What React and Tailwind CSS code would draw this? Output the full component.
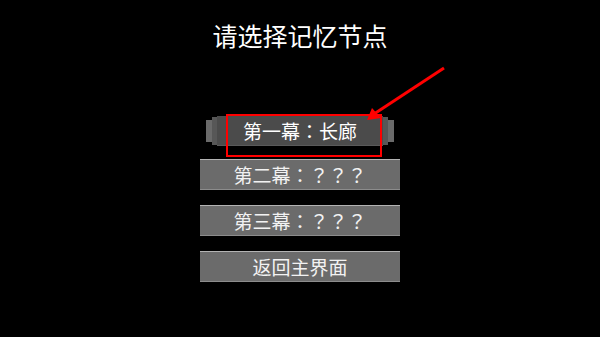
import React from "react";

const font = { fontFamily: '"Noto Sans CJK SC", "Noto Sans", sans-serif' };
const tc = { fontFamily: '"Noto Sans CJK TC", "Noto Sans CJK SC", sans-serif' };

function TC({ children }) {
  return <span style={tc}>{children}</span>;
}

function GrayButton({ children }) {
  return (
    <div className="w-[200px] h-[31px] bg-[#6b6b6b] border-t border-t-[#b3b3b3] border-b border-b-[#8c8c8c] flex items-center justify-center text-[19px] leading-none text-[#f2f2f2]">
      {children}
    </div>
  );
}

export default function App() {
  return (
    <div className="relative w-[600px] h-[337px] bg-black overflow-hidden flex flex-col items-center" style={font}>
      <div className="mt-[19px] h-[32px] flex items-center text-[25px] leading-none text-white">
        请选择记忆节点
      </div>

      <div className="mt-[65px] flex items-center">
        <div className="w-[6px] h-[22px] bg-[#6a6a6a]" />
        <div className="w-[5px] h-[28px] bg-[#575757]" />
        <div className="w-[166px] h-[30px] bg-[#4b4b4b] border-b border-b-[#5a5a5a] flex items-center justify-center text-[19px] leading-none text-white">
          第一幕<TC>：</TC>长廊
        </div>
        <div className="w-[5px] h-[28px] bg-[#575757]" />
        <div className="w-[6px] h-[22px] bg-[#6a6a6a]" />
      </div>

      <div className="mt-[13px] flex flex-col gap-[15px]">
        <GrayButton>第二幕<TC>：？？？</TC></GrayButton>
        <GrayButton>第三幕<TC>：？？？</TC></GrayButton>
        <GrayButton>返回主界面</GrayButton>
      </div>

      <div className="absolute left-[226px] top-[114px] w-[156px] h-[43px] border-2 border-[#ff0000]" />

      <svg className="absolute left-0 top-0" width="600" height="337" viewBox="0 0 600 337">
        <line x1="444" y1="68" x2="374" y2="114" stroke="#ff0000" strokeWidth="3" />
        <polygon points="367,120 372,108 381,118" fill="#ff0000" />
      </svg>
    </div>
  );
}
